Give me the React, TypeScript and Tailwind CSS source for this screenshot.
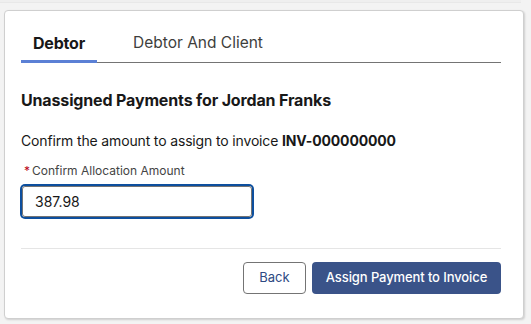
import React from 'react';

export default function App() {
    return (
        <div className="h-[324px] w-[531px] overflow-hidden bg-[#f3f3f3] font-['Inter','Noto_Sans',sans-serif] text-[#181818]">
            {/* edge of the card above */}
            <div className="h-[3px] w-[521px] bg-[#efefef] border-b border-[#e8e8e8]" />

            <div className="ml-[4px] mt-[7px] w-[520px] h-[309px] bg-white border border-[#cfcfcf] rounded-[4px] shadow-[1px_1px_2px_rgba(0,0,0,0.15)] pl-[16px] pr-[22px]">
                {/* Tabs */}
                <div className="flex pt-[15px] border-b border-[#747474]">
                    <div className="h-[37px] -mb-px px-[12px] flex items-center border-b-[3px] border-[#5b80d5] text-[16px] font-bold tracking-[-0.2px]">
                        Debtor
                    </div>
                    <div className="h-[37px] -mb-px ml-[24px] px-[12px] flex items-center border-b-[3px] border-transparent text-[15.5px] text-[#3e3e3c]">
                        Debtor And Client
                    </div>
                </div>

                <h2 className="mt-[27px] text-[16px] leading-[20px] font-bold tracking-[-0.15px]">
                    Unassigned Payments for Jordan Franks
                </h2>

                <p className="mt-[21px] text-[14px] leading-[20px] tracking-[-0.15px]">
                    Confirm the amount to assign to invoice <span className="font-bold">INV-000000000</span>
                </p>

                <label className="mt-[12px] flex items-center text-[12px] leading-[16px] text-[#444444]">
                    <span className="text-[#ba0517] ml-[3px] mr-[2px]">*</span>
                    Confirm Allocation Amount
                </label>

                <div className="mt-[7px] w-[230px] h-[31px] ml-[1px] rounded-[3px] border border-[#747474] shadow-[0_0_0_2px_#0d4f9e] flex items-center pl-[12px] text-[14px]">
                    387.98
                </div>

                <div className="mt-[31px] border-t border-[#e5e5e5]" />

                <div className="mt-[13px] flex justify-end gap-[6px]">
                    <button className="h-[32px] w-[63px] rounded-[4px] border border-[#747474] bg-white text-[13px] text-[#2e4a82]">
                        Back
                    </button>
                    <button className="h-[32px] w-[189px] rounded-[4px] bg-[#3a5389] text-[13px] font-medium tracking-[-0.1px] text-white">
                        Assign Payment to Invoice
                    </button>
                </div>
            </div>
        </div>
    );
}
